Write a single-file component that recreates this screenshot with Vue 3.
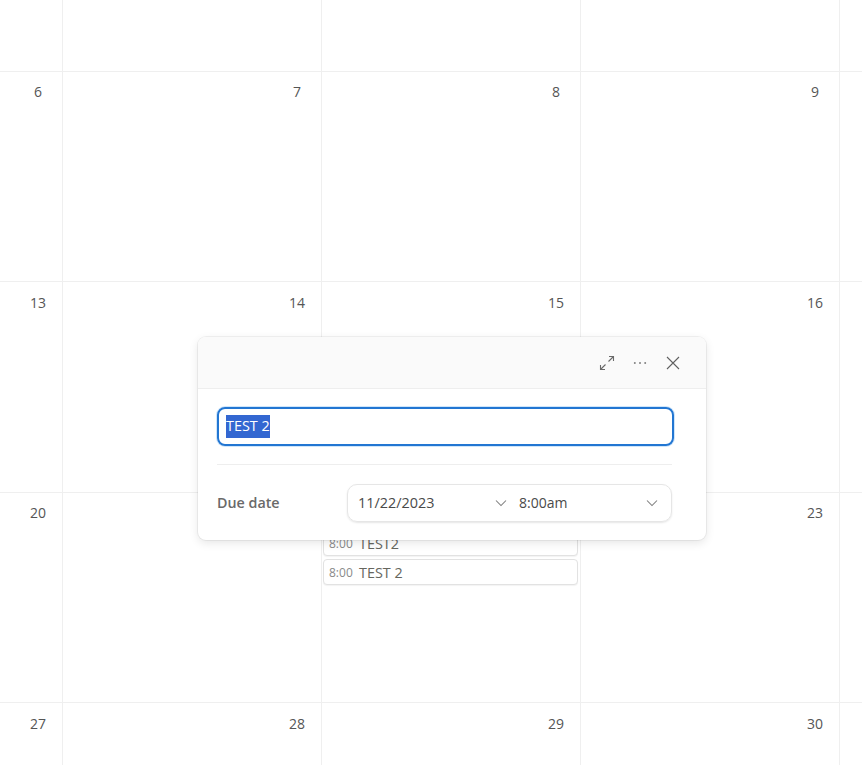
<script setup>
const weeks = [
  ['', '', '', '', ''],
  [6, 7, 8, 9, ''],
  [13, 14, 15, 16, ''],
  [20, '', '', 23, ''],
  [27, 28, 29, 30, ''],
]
const cells = weeks.flatMap((row, r) =>
  row.map((n, c) => ({ id: `${r}-${c}`, n, events: r === 3 && c === 2 ? ['TEST2', 'TEST 2'] : [] }))
)
</script>

<template>
  <div class="page">
    <div class="calendar">
      <div v-for="cell in cells" :key="cell.id" class="cell">
        <div class="num">{{ cell.n }}</div>
        <div v-for="e in cell.events" :key="e" class="event">
          <span class="time">8:00</span><span class="title">{{ e }}</span>
        </div>
      </div>
    </div>

    <div class="popup">
      <div class="head">
        <svg width="16" height="16" viewBox="0 0 16 16" fill="none" stroke="#6a6a6a" stroke-width="1.1">
          <path d="M9.5 6.5 14.5 1.5M10 1.5h4.5V6" />
          <path d="M6.5 9.5 1.5 14.5M1.5 10v4.5H6" />
        </svg>
        <svg width="16" height="16" viewBox="0 0 16 16" fill="#808080">
          <circle cx="2.8" cy="8" r="1" /><circle cx="8" cy="8" r="1" /><circle cx="13.2" cy="8" r="1" />
        </svg>
        <svg width="16" height="16" viewBox="0 0 16 16" fill="none" stroke="#606060" stroke-width="1.1">
          <path d="M2 2 14 14M14 2 2 14" />
        </svg>
      </div>
      <div class="body">
        <div class="field"><span class="sel">TEST 2</span></div>
        <div class="sep"></div>
        <div class="due">
          <span class="label">Due date</span>
          <div class="picker">
            <span class="date">11/22/2023</span>
            <svg width="12" height="8" viewBox="0 0 12 8" fill="none" stroke="#7c7c7c" stroke-width="1.05"><path d="M1 1.5 6 6.5 11 1.5" /></svg>
            <span class="clock">8:00am</span>
            <svg width="12" height="8" viewBox="0 0 12 8" fill="none" stroke="#7c7c7c" stroke-width="1.05"><path d="M1 1.5 6 6.5 11 1.5" /></svg>
          </div>
        </div>
      </div>
    </div>
  </div>
</template>

<style>
html, body { margin: 0; background: #fff; }
</style>

<style scoped>
.page {
  position: relative;
  width: 862px;
  height: 765px;
  overflow: hidden;
  font-family: "Open Sans", "Noto Sans", sans-serif;
  color: #4a4a4a;
}
.calendar {
  display: grid;
  grid-template-columns: 63px 259px 259px 259px 22px;
  grid-template-rows: 71.6px 210.5px 210.5px 210.5px 62px;
}
.cell {
  box-sizing: border-box;
  border-right: 1px solid #efefef;
  border-bottom: 1px solid #efefef;
  padding: 11.7px 9px 0 0;
  min-width: 0;
}
.cell:nth-child(5n) { border-right: 0; }
.cell:nth-last-child(-n+5) { border-bottom: 0; }
.num {
  width: 30px;
  margin-left: auto;
  text-align: center;
  font-size: 14px;
  line-height: 18px;
  height: 18px;
  color: #555;
  margin-bottom: 7.4px;
}
.event {
  box-sizing: border-box;
  height: 26px;
  margin: 0 -7px 3px 1px;
  border: 1px solid #e2e2e2;
  border-radius: 4px;
  box-shadow: 0 1px 1px rgba(0, 0, 0, .05);
  display: flex;
  align-items: center;
  padding: 1px 0 0 5px;
  background: #fff;
}
.time { font-size: 12px; color: #8a8a8a; width: 30px; }
.title { font-size: 14.4px; color: #66665e; }
.popup {
  position: absolute;
  left: 198px;
  top: 337px;
  width: 508px;
  height: 203px;
  box-sizing: border-box;
  background: #fff;
  border-radius: 8px;
  box-shadow: 0 0 0 1px rgba(0, 0, 0, .05), 0 3px 10px rgba(0, 0, 0, .1);
}
.head {
  height: 52px;
  box-sizing: border-box;
  background: #fafafa;
  border-bottom: 1px solid #eee;
  border-radius: 8px 8px 0 0;
  display: flex;
  align-items: center;
  justify-content: flex-end;
  gap: 17px;
  padding-right: 25px;
}
.body { padding: 18px 34px 0 19px; }
.field {
  box-sizing: border-box;
  height: 39px;
  width: 457px;
  border: 2px solid #2276d2;
  border-radius: 8px;
  box-shadow: 0 0 0 1px #cfe6fb;
  padding: 6px 7px;
  display: flex;
  align-items: center;
  font-size: 14.4px;
}
.sel { background: #3367d1; color: #fff; line-height: 21px; height: 23px; }
.sep { height: 1px; background: #eee; margin-top: 18px; width: 455px; }
.due { display: flex; align-items: center; margin-top: 19px; }
.label { width: 130px; font-size: 14.3px; font-weight: 600; color: #6a6a6a; padding-bottom: 2px; }
.picker {
  box-sizing: border-box;
  width: 325px;
  height: 38px;
  border: 1px solid #e6e6e6;
  border-radius: 10px;
  box-shadow: 0 1px 2px rgba(0, 0, 0, .1);
  display: flex;
  align-items: center;
  padding: 0 13px 0 10px;
  font-size: 14.4px;
  color: #4a4a4a;
}
.date { width: 137px; padding-bottom: 2px; }
.clock { width: 127px; margin-left: 12px; padding-bottom: 2px; font-size: 14px; }
</style>
